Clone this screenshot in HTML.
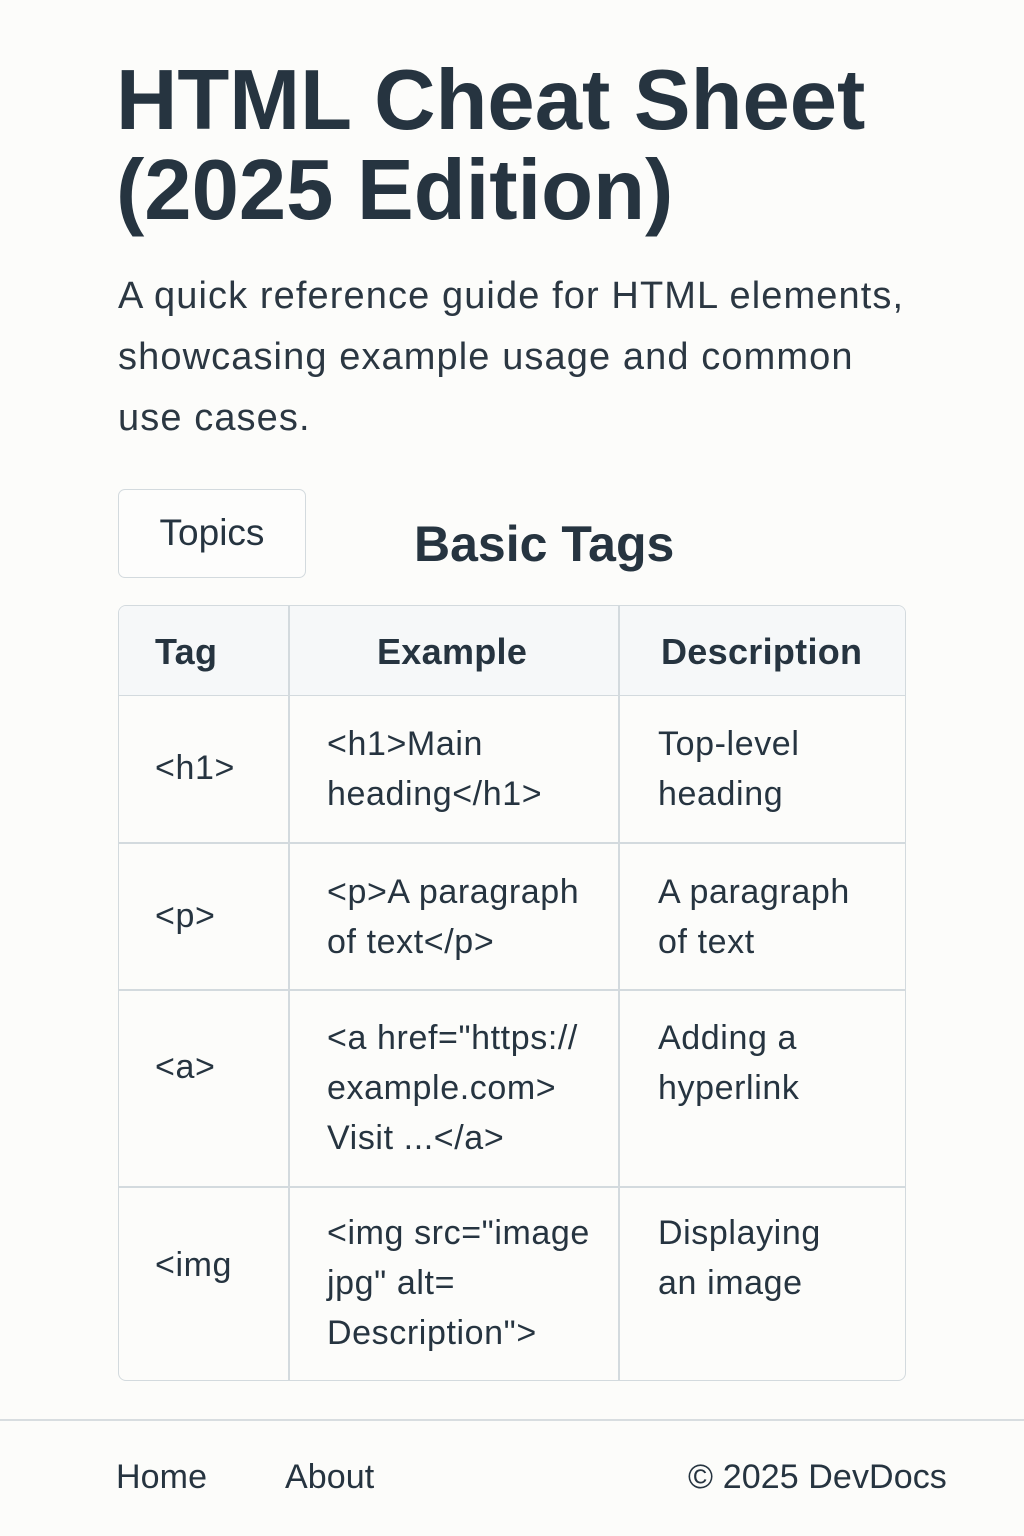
<!DOCTYPE html>
<html><head><meta charset="utf-8"><style>
*{margin:0;padding:0;box-sizing:border-box}
body{width:1024px;height:1536px;background:#fcfcfa;font-family:"Liberation Sans",sans-serif;color:#263440;position:relative;overflow:hidden}
.a{position:absolute;white-space:nowrap}
h1{position:absolute;left:116px;top:56px;font-size:85px;line-height:90px;font-weight:bold;letter-spacing:0px;white-space:nowrap}
.sub{position:absolute;left:118px;top:266px;font-size:38px;line-height:61px;white-space:nowrap;color:#2b3742;letter-spacing:1.1px}
.btn{position:absolute;left:118px;top:489px;width:188px;height:89px;border:1.5px solid #d3dade;border-radius:7px;font-size:37px;line-height:86px;text-align:center;background:#fdfdfc}
.tbl{position:absolute;left:118px;top:605px;width:788px;height:776px;border:1.5px solid #d3dade;border-radius:8px;overflow:hidden}
.hd{position:absolute;left:0;top:0;width:100%;height:90px;background:#f6f8f9;border-bottom:1.5px solid #d3dade}
.vl{position:absolute;top:0;width:1.5px;height:100%;background:#d3dade}
.hl{position:absolute;left:0;width:100%;height:1.5px;background:#d3dade}
.t{position:absolute;font-size:34px;line-height:50px;white-space:nowrap;letter-spacing:0.6px}
.th{font-weight:bold;font-size:36px;letter-spacing:0.3px}
.foot{position:absolute;left:0;top:1419px;width:1024px;height:1.5px;background:#d8dde0}
.f{position:absolute;top:1456px;font-size:34px;line-height:42px;letter-spacing:0.1px}
</style></head><body>
<h1>HTML Cheat Sheet<br>(2025 Edition)</h1>
<div class="sub">A quick reference guide for HTML elements,<br>showcasing example usage and common<br>use cases.</div>
<div class="btn">Topics</div>
<div class="a" style="left:414px;top:514px;font-size:50px;font-weight:bold;line-height:60px">Basic Tags</div>
<div class="tbl">
<div class="hd"></div>
<div class="vl" style="left:169px"></div>
<div class="vl" style="left:499px"></div>
<div class="hl" style="top:236px"></div>
<div class="hl" style="top:383px"></div>
<div class="hl" style="top:580px"></div>
<div class="t th" style="left:36px;top:21px">Tag</div>
<div class="t th" style="left:258px;top:21px">Example</div>
<div class="t th" style="left:542px;top:21px">Description</div>
<div class="t" style="left:36px;top:137px">&lt;h1&gt;</div>
<div class="t" style="left:208px;top:113px">&lt;h1&gt;Main<br>heading&lt;/h1&gt;</div>
<div class="t" style="left:539px;top:113px">Top-level<br>heading</div>
<div class="t" style="left:36px;top:285px">&lt;p&gt;</div>
<div class="t" style="left:208px;top:261px">&lt;p&gt;A paragraph<br>of text&lt;/p&gt;</div>
<div class="t" style="left:539px;top:261px">A paragraph<br>of text</div>
<div class="t" style="left:36px;top:436px">&lt;a&gt;</div>
<div class="t" style="left:208px;top:407px">&lt;a href="https://<br>example.com&gt;<br>Visit ...&lt;/a&gt;</div>
<div class="t" style="left:539px;top:407px">Adding a<br>hyperlink</div>
<div class="t" style="left:36px;top:634px">&lt;img</div>
<div class="t" style="left:208px;top:602px">&lt;img src="image<br>jpg" alt=<br>Description"&gt;</div>
<div class="t" style="left:539px;top:602px">Displaying<br>an image</div>
</div>
<div class="foot"></div>
<div class="f" style="left:116px">Home</div>
<div class="f" style="left:285px">About</div>
<div class="f" style="left:688px">© 2025 DevDocs</div>
</body></html>
